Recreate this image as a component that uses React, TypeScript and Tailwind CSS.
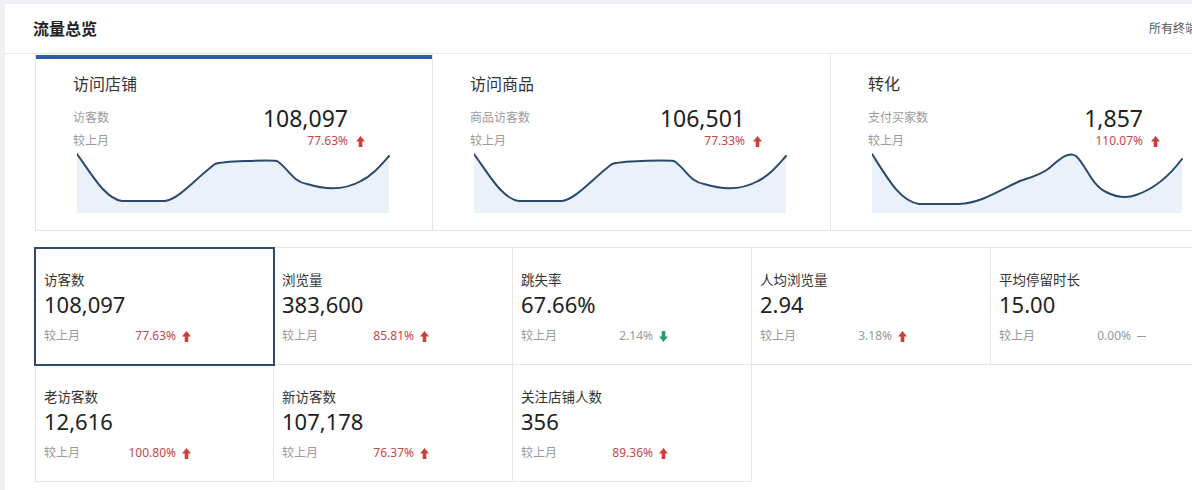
import React from "react";

type Trend = "up" | "down" | "flat";

interface TopCard {
  title: string;
  label: string;
  value: string;
  pct: string;
  line: string;
  area: string;
  active?: boolean;
}

interface Metric {
  label: string;
  value: string;
  pct: string;
  trend: Trend;
  muted?: boolean;
}

const wave1 =
  "M0,3 C14,22 28,48 45,50 L88,50 C102,48 118,28 138,13 C146,10 190,9 200,10 C212,18 216,31 230,33 C246,38 266,40 284,30 C296,24 304,14 312,5";
const wave3 =
  "M0,3 C16,28 28,50 47,53 L87,53 C110,52 130,38 148,30 C160,26 168,24 176,18 C188,8 196,0 204,5 C214,14 220,35 234,41 C244,46 254,48 264,44 C282,38 298,24 310,8";

const topCards: TopCard[] = [
  { title: "访问店铺", label: "访客数", value: "108,097", pct: "77.63%", line: wave1, area: wave1 + " L312,62 L0,62 Z", active: true },
  { title: "访问商品", label: "商品访客数", value: "106,501", pct: "77.33%", line: wave1, area: wave1 + " L312,62 L0,62 Z" },
  { title: "转化", label: "支付买家数", value: "1,857", pct: "110.07%", line: wave3, area: wave3 + " L310,62 L0,62 Z" },
];

const metrics: Metric[] = [
  { label: "访客数", value: "108,097", pct: "77.63%", trend: "up" },
  { label: "浏览量", value: "383,600", pct: "85.81%", trend: "up" },
  { label: "跳失率", value: "67.66%", pct: "2.14%", trend: "down", muted: true },
  { label: "人均浏览量", value: "2.94", pct: "3.18%", trend: "up", muted: true },
  { label: "平均停留时长", value: "15.00", pct: "0.00%", trend: "flat", muted: true },
  { label: "老访客数", value: "12,616", pct: "100.80%", trend: "up" },
  { label: "新访客数", value: "107,178", pct: "76.37%", trend: "up" },
  { label: "关注店铺人数", value: "356", pct: "89.36%", trend: "up" },
];

function TrendIcon({ trend }: { trend: Trend }) {
  if (trend === "flat") {
    return <span className="block w-[9px] h-px bg-[#9a9a9a]" />;
  }
  return (
    <svg viewBox="0 0 10 12" className={`w-[9px] h-[11px] ${trend === "down" ? "rotate-180" : ""}`}>
      <polygon points="5,0 10,6 7,6 7,12 3,12 3,6 0,6" fill={trend === "up" ? "#cf3f3a" : "#2e9a6c"} />
    </svg>
  );
}

function Card({ c }: { c: TopCard }) {
  return (
    <div className="w-[398px] first:w-[397px] h-[177px] border-l border-b border-[#e6e6e6] pt-[1px] box-border">
      <div className={`h-[4px] ${c.active ? "bg-[#2f5aa9]" : "bg-white"}`} />
      <div className="pl-[37px]">
        <div className="mt-[14px] h-[22px] leading-[22px] text-[16px] text-[#333]">{c.title}</div>
        <div className="mt-[8px] w-[292px] h-[30px] flex items-center">
          <span className="flex-1 text-[12px] text-[#9a9a9a]">{c.label}</span>
          <span className="text-[23px] leading-[30px] text-[#222]">{c.value}</span>
          <span className="w-[17px]" />
        </div>
        <div className="w-[292px] h-[16px] flex items-center">
          <span className="flex-1 text-[12px] text-[#9a9a9a]">较上月</span>
          <span className="text-[12px] text-[#c4474c]">{c.pct}</span>
          <span className="w-[17px] flex justify-end">
            <TrendIcon trend="up" />
          </span>
        </div>
        <svg viewBox="0 0 313 62" className="mt-[2px] ml-[4px] w-[313px] h-[62px]" preserveAspectRatio="none">
          <path d={c.area} fill="#ebf1fb" />
          <path d={c.line} fill="none" stroke="#2b4a6b" strokeWidth="2" strokeLinecap="round" />
        </svg>
      </div>
    </div>
  );
}

function MetricCell({ m, index }: { m: Metric; index: number }) {
  const firstCol = index % 5 === 0;
  const selected = index === 0;
  return (
    <div
      className={`relative h-[117px] border-r border-b border-[#e6e6e6] box-border pl-[8px] pt-[22px] ${firstCol ? "border-l" : ""} ${
        selected ? "z-10 outline-2 outline-solid outline-[#2c4a72] -outline-offset-1" : ""
      }`}
    >
      <div className="h-[20px] leading-[20px] text-[13.5px] text-[#333]">{m.label}</div>
      <div className="h-[28px] leading-[28px] text-[22px] text-[#222]">{m.value}</div>
      <div className="mt-[10px] h-[16px] flex items-center">
        <div className="w-[132px] flex items-center justify-between">
          <span className="text-[12px] text-[#9a9a9a]">较上月</span>
          <span className={`text-[12px] ${m.muted ? "text-[#999]" : "text-[#c4474c]"}`}>{m.pct}</span>
        </div>
        <span className="ml-[6px] flex items-center">
          <TrendIcon trend={m.trend} />
        </span>
      </div>
    </div>
  );
}

export default function App() {
  return (
    <div
      className="w-[1192px] h-[490px] overflow-hidden bg-[#eef0f3] pt-[4px] pl-[5px]"
      style={{ fontFamily: '"Noto Sans", "Noto Sans CJK SC", sans-serif' }}
    >
      <div className="w-[1240px] h-[486px] bg-white">
        <div className="h-[50px] border-b border-[#e8e8e8] flex items-center pl-[28px]">
          <span className="text-[16px] font-bold text-[#222]">流量总览</span>
          <span className="ml-auto mr-[48px] text-[12px] text-[#555]">所有终端</span>
        </div>
        <div className="pl-[30px]">
          <div className="flex">
            {topCards.map((c) => (
              <Card key={c.title} c={c} />
            ))}
          </div>
          <div className="mt-[16px] w-[1195px] grid grid-cols-5 border-t border-[#e6e6e6]">
            {metrics.map((m, i) => (
              <MetricCell key={m.label} m={m} index={i} />
            ))}
          </div>
        </div>
      </div>
    </div>
  );
}
